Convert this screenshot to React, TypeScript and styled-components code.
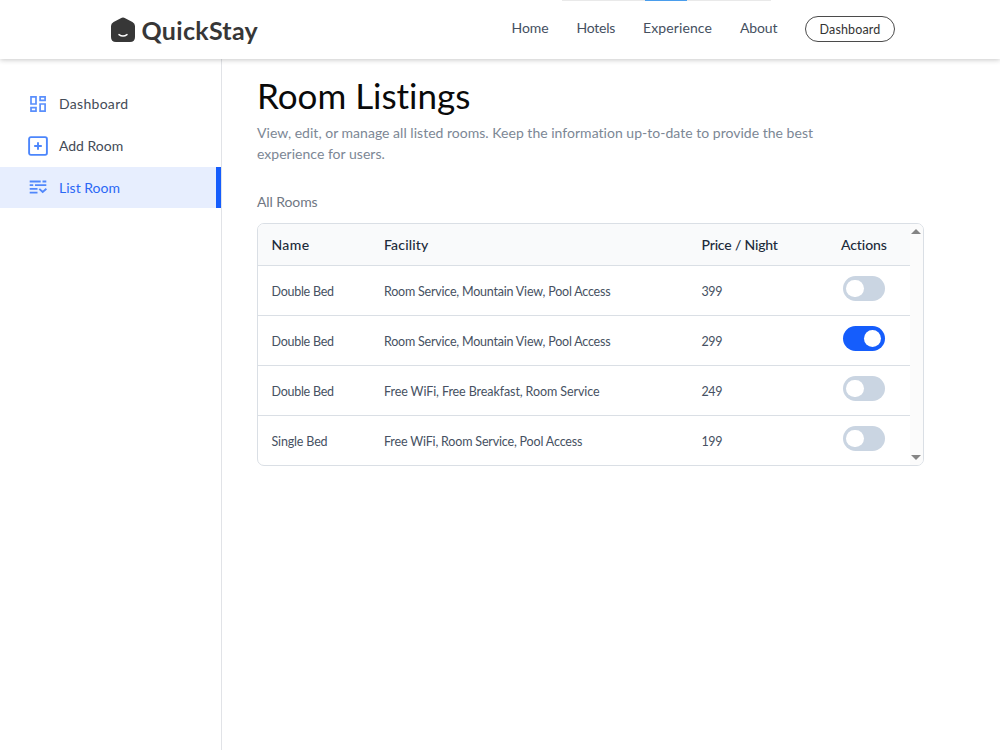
import React from "react";
import styled, { createGlobalStyle } from "styled-components";

const GlobalStyle = createGlobalStyle`
  * { box-sizing: border-box; }
  body {
    margin: 0;
    background: #fff;
    font-family: "Lato", "Liberation Sans", sans-serif;
    font-size: 14px;
    font-variant-ligatures: none;
    overflow: hidden;
  }
`;

const Page = styled.div`
  display: flex;
  flex-direction: column;
  height: 750px;
`;

const Header = styled.header`
  position: relative;
  z-index: 1;
  flex: none;
  display: flex;
  align-items: center;
  justify-content: space-between;
  height: 59px;
  padding: 0 105px 0 110px;
  background: #fff;
  box-shadow: 0 1px 5px rgba(0, 0, 0, 0.22);
`;

const LoadingTrack = styled.div`
  position: absolute;
  top: 0;
  left: 562px;
  width: 209px;
  height: 1px;
  padding-left: 83px;
  background: #e9e9e9;
`;

const LoadingBar = styled.div`
  width: 42px;
  height: 1px;
  background: #4a9dec;
`;

const Brand = styled.div`
  display: flex;
  align-items: center;
  gap: 5.5px;
  color: #373737;
`;

const BrandName = styled.span<{ $track: number }>`
  font-size: 25px;
  font-weight: 700;
  line-height: 30px;
  letter-spacing: ${(p) => p.$track}px;
`;

const Nav = styled.nav`
  display: flex;
  align-items: center;
  gap: 28px;
  padding-bottom: 1px;
`;

const NavLink = styled.a<{ $width: number; $track: number }>`
  width: ${(p) => p.$width}px;
  margin-top: -2px;
  color: #45505f;
  line-height: 20px;
  letter-spacing: ${(p) => p.$track}px;
  white-space: nowrap;
`;

const PillButton = styled.button`
  width: 90px;
  height: 26px;
  padding: 1px 0 0;
  border: 1px solid #4b4b4b;
  border-radius: 13px;
  background: #fff;
  color: #333;
  font-family: inherit;
  font-size: 12.5px;
  line-height: 23px;
  letter-spacing: 0.15px;
`;

const Body = styled.div`
  display: flex;
  flex: 1;
`;

const Sidebar = styled.aside`
  width: 222px;
  padding-top: 24px;
  border-right: 1px solid #e1e3e7;
`;

const SideItem = styled.a<{ $active?: boolean; $track: number }>`
  display: flex;
  align-items: center;
  gap: 11px;
  height: 41.75px;
  padding-left: 28px;
  border-right: 5px solid ${(p) => (p.$active ? "#155dfc" : "transparent")};
  background: ${(p) => (p.$active ? "#e7eefe" : "transparent")};
  color: ${(p) => (p.$active ? "#2b68f5" : "#444b57")};
  letter-spacing: ${(p) => p.$track}px;
`;

const Main = styled.main`
  width: 702px;
  padding: 14px 0 0 35px;
`;

const Title = styled.h1`
  margin: 0;
  color: #0a0a0a;
  font-size: 35px;
  font-weight: 400;
  line-height: 44px;
  letter-spacing: -0.02px;
`;

const Subtitle = styled.p`
  width: 600px;
  margin: 5px 0 0;
  color: #7c8795;
  line-height: 21px;
  letter-spacing: 0.02px;
`;

const SectionLabel = styled.p`
  margin: 27px 0 11px;
  color: #6f7783;
  line-height: 21px;
  letter-spacing: -0.1px;
`;

const TableFrame = styled.div`
  display: flex;
  height: 243px;
  border: 1px solid #dadfe5;
  border-radius: 7px;
  overflow: hidden;
`;

const Table = styled.div`
  flex: 1;
`;

const columns = "112.5px 317.5px 139.5px 1fr";

const HeadRow = styled.div`
  display: grid;
  grid-template-columns: ${columns};
  align-items: center;
  height: 42px;
  padding-left: 13.5px;
  border-bottom: 1px solid #dadfe5;
  background: #f9fafb;
`;

const HeadCell = styled.span<{ $track: number }>`
  color: #202a3a;
  font-weight: 500;
  letter-spacing: ${(p) => p.$track}px;
`;

const Row = styled.div`
  display: grid;
  grid-template-columns: ${columns};
  align-items: center;
  height: 50px;
  padding-left: 13.5px;
  border-bottom: 1px solid #dadfe5;
  &:last-child {
    height: 49px;
    border-bottom: 0;
  }
`;

const Cell = styled.span<{ $track: number }>`
  padding-top: 1px;
  color: #465162;
  font-size: 12.5px;
  letter-spacing: ${(p) => p.$track}px;
  white-space: nowrap;
`;

const Toggle = styled.span<{ $on: boolean }>`
  display: flex;
  align-items: center;
  justify-content: ${(p) => (p.$on ? "flex-end" : "flex-start")};
  width: 42px;
  height: 25px;
  margin: -4px 0 0 1.75px;
  padding: 0 3.5px;
  border-radius: 13px;
  background: ${(p) => (p.$on ? "#155dfc" : "#cad5e2")};
`;

const Knob = styled.span`
  width: 17.5px;
  height: 17.5px;
  border-radius: 50%;
  background: #fff;
`;

const Scrollbar = styled.div`
  display: flex;
  flex-direction: column;
  justify-content: space-between;
  align-items: center;
  width: 13px;
  padding: 5px 1px 5px 0;
  background: #fbfbfb;
`;

const Arrow = styled.i<{ $down?: boolean }>`
  border: 5px solid transparent;
  border-top: ${(p) => (p.$down ? "5px solid #858585" : "0")};
  border-bottom: ${(p) => (p.$down ? "0" : "5px solid #858585")};
`;

const LogoMark = () => (
  <svg width="26" height="26" viewBox="0 0 26 26">
    <path d="M10.8 1.2Q13 0 15.2 1.2L22.4 4.9Q25 6.3 25 9V20Q25 25 20 25H6Q1 25 1 20V9Q1 6.3 3.6 4.9Z" fill="#373737" />
    <path d="M9 17.6Q13 20.4 17 17.6" fill="none" stroke="#fff" strokeWidth="1.5" strokeLinecap="round" />
  </svg>
);

const DashboardIcon = () => (
  <svg width="20" height="20" viewBox="0 0 20 20" fill="none" stroke="#5a8ffc" strokeWidth="1.7">
    <path d="M3 2.8h5v7.2H3zM12.1 2.8h5v3.6h-5zM12.1 10h5v7.2h-5zM3 13.6h5v3.6H3z" />
  </svg>
);

const AddIcon = () => (
  <svg width="20" height="20" viewBox="0 0 20 20" fill="none" stroke="#4c86fc" strokeWidth="1.9">
    <rect x="1.1" y="1.1" width="17.8" height="17.8" rx="1.8" />
    <path d="M10 6.2v7.6M6.2 10h7.6" />
  </svg>
);

const ListIcon = () => (
  <svg width="20" height="20" viewBox="0 0 20 20" fill="none" stroke="#5187fb" strokeWidth="1.8">
    <path d="M1.7 4.5h11M14.5 4.5h3.8M1.7 8.2h3.5M7 8.2h11.3M1.7 11.9h7.8M1.7 15.6h7.8M11.3 11.8l3.4 3.2L18.4 11.8" />
  </svg>
);

const rooms = [
  { name: "Double Bed", nameTrack: -0.26, facility: "Room Service, Mountain View, Pool Access", track: -0.21, price: "399", on: false },
  { name: "Double Bed", nameTrack: -0.26, facility: "Room Service, Mountain View, Pool Access", track: -0.21, price: "299", on: true },
  { name: "Double Bed", nameTrack: -0.26, facility: "Free WiFi, Free Breakfast, Room Service", track: -0.09, price: "249", on: false },
  { name: "Single Bed", nameTrack: -0.16, facility: "Free WiFi, Room Service, Pool Access", track: -0.17, price: "199", on: false },
];

export default function App() {
  return (
    <Page>
      <GlobalStyle />
      <Header>
        <LoadingTrack><LoadingBar /></LoadingTrack>
        <Brand>
          <LogoMark />
          <BrandName $track={0.3}>QuickStay</BrandName>
        </Brand>
        <Nav>
          <NavLink $width={37} $track={-0.08}>Home</NavLink>
          <NavLink $width={38.5} $track={-0.22}>Hotels</NavLink>
          <NavLink $width={69} $track={0.11}>Experience</NavLink>
          <NavLink $width={37} $track={-0.15}>About</NavLink>
          <PillButton>Dashboard</PillButton>
        </Nav>
      </Header>
      <Body>
        <Sidebar>
          <SideItem $track={0.3}><DashboardIcon />Dashboard</SideItem>
          <SideItem $track={-0.02}><AddIcon />Add Room</SideItem>
          <SideItem $active $track={0.01}><ListIcon />List Room</SideItem>
        </Sidebar>
        <Main>
          <Title>Room Listings</Title>
          <Subtitle>
            View, edit, or manage all listed rooms. Keep the information up-to-date to provide the best
            experience for users.
          </Subtitle>
          <SectionLabel>All Rooms</SectionLabel>
          <TableFrame>
            <Table>
              <HeadRow>
                <HeadCell $track={0.35}>Name</HeadCell>
                <HeadCell $track={0.17}>Facility</HeadCell>
                <HeadCell $track={-0.17}>Price / Night</HeadCell>
                <HeadCell $track={-0.1}>Actions</HeadCell>
              </HeadRow>
              {rooms.map((room, i) => (
                <Row key={i}>
                  <Cell $track={room.nameTrack}>{room.name}</Cell>
                  <Cell $track={room.track}>{room.facility}</Cell>
                  <Cell $track={-0.4}>{room.price}</Cell>
                  <Toggle $on={room.on}><Knob /></Toggle>
                </Row>
              ))}
            </Table>
            <Scrollbar><Arrow /><Arrow $down /></Scrollbar>
          </TableFrame>
        </Main>
      </Body>
    </Page>
  );
}
